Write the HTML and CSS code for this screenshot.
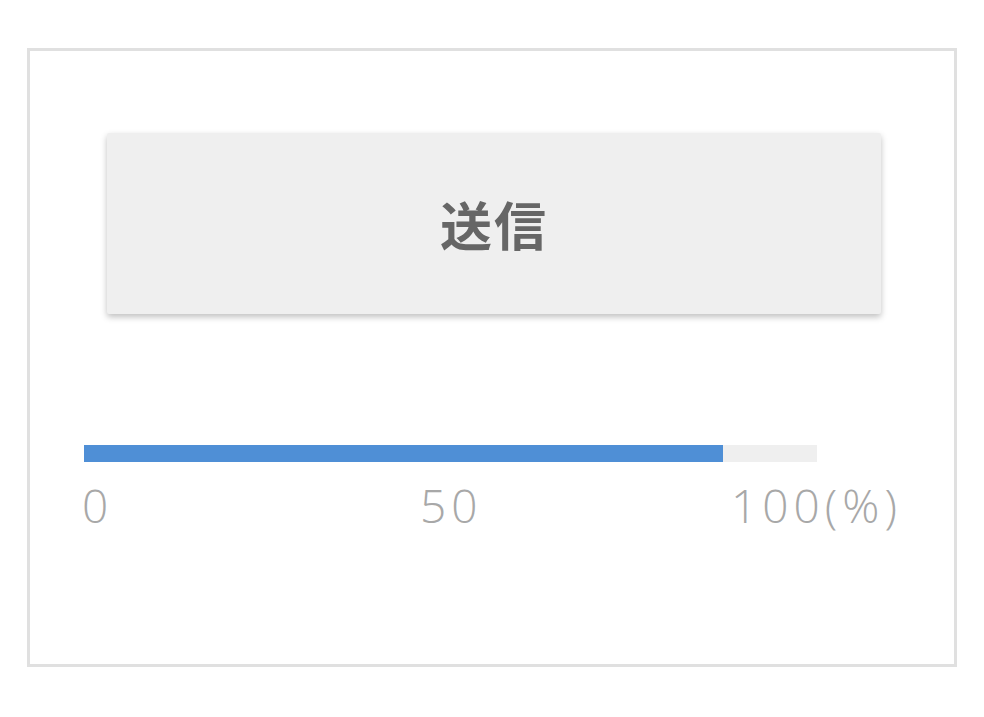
FILE: index.html
```html
<!DOCTYPE html>
<html lang="ja">
<head>
  <meta charset="UTF-8">
  <title>送信</title>
  <link rel="stylesheet" href="styles.css">
</head>
<body>

  <div class="panel">
    <button class="send-btn" type="button">送信</button>

    <!-- upload progress -->
    <div class="progress">
      <div class="track">
        <div class="fill" style="width: 87.2%"></div>
      </div>
      <div class="scale">
        <span>0</span>
        <span>50</span>
        <span>100(%)</span>
      </div>
    </div>
  </div>

</body>
</html>
```

FILE: styles.css
```css
body {
  margin: 0;
  background: #fff;
  font-family: "Open Sans", "Noto Sans CJK JP", sans-serif;
}
.panel {
  box-sizing: border-box;
  width: 930px;
  height: 619px;
  margin: 48px 0 0 27px;
  border: 3px solid #e0e0e0;
  padding: 82px 0 0;
}
.send-btn {
  display: block;
  width: 774px;
  height: 181px;
  margin: 0 0 0 77px;
  border: none;
  border-radius: 2px;
  background: #efefef;
  box-shadow: 0 3px 6px rgba(0, 0, 0, 0.25);
  color: #666;
  font-family: "Noto Sans CJK JP", sans-serif;
  font-size: 52px;
  font-weight: 700;
  letter-spacing: 2px;
  cursor: pointer;
}
.progress {
  margin: 131px 0 0 54px;
}
.track {
  width: 733px;
  height: 17px;
  background: #efefef;
}
.fill {
  height: 100%;
  background: #4f8fd6;
}
.scale {
  display: grid;
  grid-template-columns: 338px 311px auto;
  margin: 16px 0 0 -2px;
  color: #a8a8a8;
  font-size: 46px;
  font-weight: 300;
  letter-spacing: 5px;
  line-height: 1.2;
}
```
